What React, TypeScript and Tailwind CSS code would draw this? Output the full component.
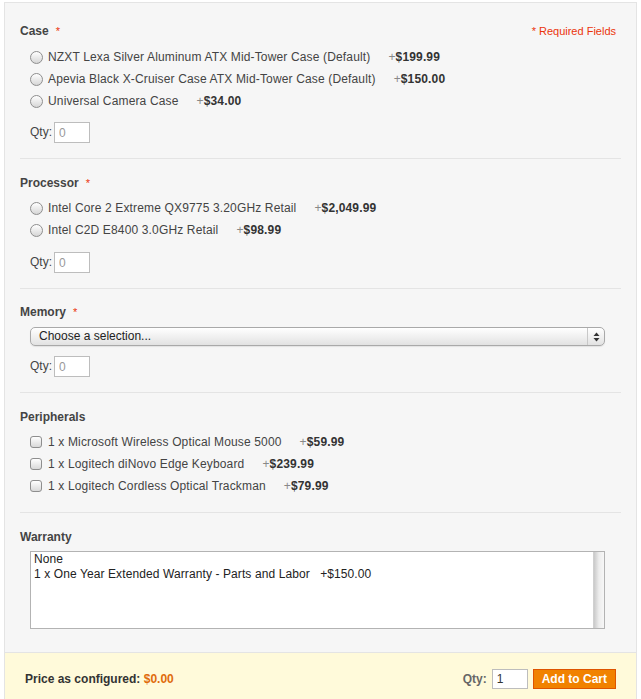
import React from 'react';

interface Option {
  label: string;
  price: string;
}

const caseOptions: Option[] = [
  { label: 'NZXT Lexa Silver Aluminum ATX Mid-Tower Case (Default)', price: '$199.99' },
  { label: 'Apevia Black X-Cruiser Case ATX Mid-Tower Case (Default)', price: '$150.00' },
  { label: 'Universal Camera Case', price: '$34.00' },
];

const processorOptions: Option[] = [
  { label: 'Intel Core 2 Extreme QX9775 3.20GHz Retail', price: '$2,049.99' },
  { label: 'Intel C2D E8400 3.0GHz Retail', price: '$98.99' },
];

const peripheralOptions: Option[] = [
  { label: '1 x Microsoft Wireless Optical Mouse 5000', price: '$59.99' },
  { label: '1 x Logitech diNovo Edge Keyboard', price: '$239.99' },
  { label: '1 x Logitech Cordless Optical Trackman', price: '$79.99' },
];

const Radio = () => (
  <span className="inline-block w-[13px] h-[13px] shrink-0 rounded-full border border-[#8e8e8e] bg-linear-to-b from-white to-[#d6d6d6]" />
);

const Checkbox = () => (
  <span className="inline-block w-[12px] h-[12px] shrink-0 rounded-[3px] border border-[#8e8e8e] bg-linear-to-b from-white to-[#d9d9d9]" />
);

const OptionRow: React.FC<{ option: Option; type: 'radio' | 'checkbox' }> = ({ option, type }) => (
  <div className="flex items-center h-[22px] tracking-[0.15px]">
    {type === 'radio' ? <Radio /> : <Checkbox />}
    <span className={(type === 'radio' ? 'ml-[5px]' : 'ml-[6px]') + ' text-[#444]'}>{option.label}</span>
    <span className="ml-[18px] text-[#888]">
      +<span className="font-bold text-[#333]">{option.price}</span>
    </span>
  </div>
);

const Heading: React.FC<{ title: string; required?: boolean }> = ({ title, required }) => (
  <div className="flex items-center h-[15px]">
    <span className="font-bold text-[#444]">{title}</span>
    {required && <span className="ml-[7px] text-[11px] text-[#eb340a]">*</span>}
  </div>
);

const QtyRow: React.FC<{ top?: string }> = ({ top = 'mt-[11px]' }) => (
  <div className={top + ' flex items-center'}>
    <span className="mr-[2px] text-[#444]">Qty:</span>
    <input
      defaultValue="0"
      className="w-[36px] h-[21px] border border-[#bdbdbd] bg-white pl-[4px] text-[12px] text-[#999] outline-none"
    />
  </div>
);

export default function App() {
  return (
    <div className="min-h-screen bg-white pt-[2px] px-[4px] font-['Liberation_Sans',Arial,sans-serif] text-[12px] leading-[15px] text-[#444]">
      <div className="border border-[#e4e4e4] bg-[#f6f6f6] px-[15px] pt-[4px]">
        {/* Case */}
        <div className="border-b border-[#e4e4e4] pb-[15px]">
          <div className="mt-[17px] flex items-center justify-between">
            <Heading title="Case" required />
            <span className="pr-[5px] text-[11px] text-[#eb340a]">* Required Fields</span>
          </div>
          <div className="mt-[7px] pl-[10px]">
            {caseOptions.map(o => (
              <OptionRow key={o.label} option={o} type="radio" />
            ))}
            <QtyRow top="mt-[10px]" />
          </div>
        </div>

        {/* Processor */}
        <div className="border-b border-[#e4e4e4] pb-[15px]">
          <div className="mt-[17px]">
            <Heading title="Processor" required />
          </div>
          <div className="mt-[6px] pl-[10px]">
            {processorOptions.map(o => (
              <OptionRow key={o.label} option={o} type="radio" />
            ))}
            <QtyRow />
          </div>
        </div>

        {/* Memory */}
        <div className="border-b border-[#e4e4e4] pb-[15px]">
          <div className="mt-[16px]">
            <Heading title="Memory" required />
          </div>
          <div className="pl-[10px]">
            <div className="mt-[7px] w-[575px] h-[19px] flex items-center rounded-[5px] border border-[#a9a9a9] bg-linear-to-b from-white to-[#e2e2e2] shadow-[0_1px_1px_rgba(0,0,0,0.08)]">
              <span className="flex-1 pl-[8px] text-[#222]">Choose a selection...</span>
              <span className="w-[17px] h-full flex items-center justify-center border-l border-[#c8c8c8]">
                <svg width="7" height="10" viewBox="0 0 7 10">
                  <path d="M3.5 0.5 L6.5 4 L0.5 4 Z" fill="#333" />
                  <path d="M3.5 9.5 L6.5 6 L0.5 6 Z" fill="#333" />
                </svg>
              </span>
            </div>
            <QtyRow top="mt-[10px]" />
          </div>
        </div>

        {/* Peripherals */}
        <div className="border-b border-[#e4e4e4] pb-[15px]">
          <div className="mt-[17px]">
            <Heading title="Peripherals" />
          </div>
          <div className="mt-[6px] pl-[10px]">
            {peripheralOptions.map(o => (
              <OptionRow key={o.label} option={o} type="checkbox" />
            ))}
          </div>
        </div>

        {/* Warranty */}
        <div className="pb-[23px]">
          <div className="mt-[17px]">
            <Heading title="Warranty" />
          </div>
          <div className="pl-[10px]">
            <div className="mt-[6px] w-[575px] h-[78px] flex border border-[#b3b3b3] bg-white">
              <div className="flex-1 pl-[3px] text-[#222] leading-[15px] tracking-[0.1px]">
                <div>None</div>
                <div className="whitespace-pre">1 x One Year Extended Warranty - Parts and Labor   +$150.00</div>
              </div>
              <div className="w-[11px] h-full border-l border-[#d0d0d0] bg-linear-to-r from-[#c9c9c9] via-[#ededed] to-[#f7f7f7]" />
            </div>
          </div>
        </div>
      </div>

      {/* Bottom bar */}
      <div className="flex items-center justify-between border-x border-[#e4e4e4] bg-[#fffada] px-[20px] pt-[16px] pb-[15px]">
        <div className="font-bold text-[#333]">
          Price as configured: <span className="text-[#e06b0c]">$0.00</span>
        </div>
        <div className="flex items-center">
          <span className="font-bold text-[#666]">Qty:</span>
          <input
            defaultValue="1"
            className="ml-[5px] w-[36px] h-[20px] border border-[#bdbdbd] bg-white pl-[4px] text-[12px] text-[#333] outline-none"
          />
          <button className="ml-[5px] h-[20px] border border-[#de5400] bg-[#f18200] px-[8px] font-bold text-white leading-[18px]">
            Add to Cart
          </button>
        </div>
      </div>
    </div>
  );
}
